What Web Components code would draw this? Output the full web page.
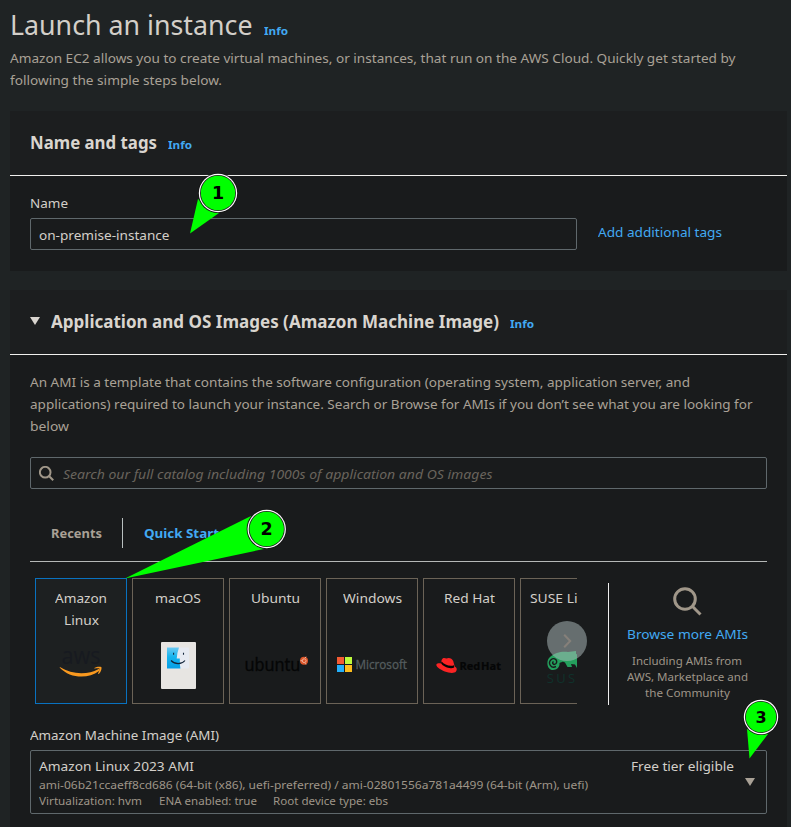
<!DOCTYPE html>
<html lang="en">
<head>
<meta charset="utf-8">
<title>Launch an instance</title>
<style>
html,body{margin:0;height:100%}
body{background:#1f2324;font:13px/22px "Noto Sans","Open Sans",sans-serif;color:#d3cfc9;overflow:hidden}
</style>
</head>
<body>
<launch-page></launch-page>
<script>
const define=(name,html,setup)=>customElements.define(name,class extends HTMLElement{
  constructor(){super();this.attachShadow({mode:'open'});}
  connectedCallback(){
    if(this.shadowRoot.childNodes.length)return;
    const t=document.createElement('template');
    t.innerHTML=typeof html==='function'?html(this):html;
    this.shadowRoot.append(t.content.cloneNode(true));
    if(setup)setup(this);
  }
});

/* One line of text, stretched so that it spans the width given in "w". */
define('text-line','<style>:host{display:block;flex:none;white-space:nowrap}span{display:inline-block;vertical-align:top;transform-origin:0 0}</style><span><slot></slot></span>',el=>{
  const s=el.shadowRoot.querySelector('span'),w=+el.getAttribute('w');
  if(!w)return;
  const k=w/s.getBoundingClientRect().width;
  s.style.transform=`scaleX(${k})`;
  el.style.width=w+'px';
});

define('info-link','<style>:host{display:block;font:bold 11px/22px "Noto Sans",sans-serif;color:#42a9f2}</style><text-line w="24">Info</text-line>');

define('panel-box',`<style>
:host{display:block;background:#191b1c;color:#d3cfc9}
header{display:flex;align-items:flex-start;height:64px;padding:20px 20px 0;box-sizing:border-box;background:#1c1e1f}
.line{height:1px;background:#f0efed}
.body{padding:16px 20px 0}
</style><header><slot name="header"></slot></header><div class="line"></div><div class="body"><slot></slot></div>`);

define('caret-down',`<style>:host{display:block;width:10px;height:8px}svg{display:block}</style><svg width="10" height="8"><path d="M0 0H10L5 8Z" fill="currentColor"/></svg>`);

define('search-glyph',el=>{const s=el.getAttribute('size');return `<style>:host{display:block;width:${s}px;height:${s}px}svg{display:block}</style>
<svg width="${s}" height="${s}" viewBox="0 0 29 29" fill="none" stroke="#a09789" stroke-width="${s<20?3.8:3}"><circle cx="12" cy="12" r="10.3"/><path d="M19.3 19.3L27.5 27.5"/></svg>`});

define('text-field',`<style>
:host{display:flex;align-items:flex-start;box-sizing:border-box;height:32px;border:1px solid #5f686c;border-radius:2px;padding:5px 8px 0;background:#191b1c}
</style><slot></slot>`);

define('os-card',`<style>
:host{display:flex;flex-direction:column;flex:none;box-sizing:border-box;width:92px;height:126px;border:1px solid #6b6357;padding-top:8px;align-items:center}
:host([selected]){border-color:#0972c0;background:#1d2021}
.name{height:43px;display:flex;flex-direction:column;align-items:center}
</style><div class="name"><slot></slot></div><slot name="logo"></slot>`);

define('logo-art',el=>{
const art={
aws:`<text x="25.5" y="34" font-size="24" textLength="39" lengthAdjust="spacingAndGlyphs" fill="#171a20" font-family="Open Sans">aws</text>
<g transform="translate(-1.2 -1.2)" fill="#f9991f"><path d="M25 38.2C38 46.5 54 45.5 63.3 40.4C64.6 39.6 65.5 41 64.2 42.1C53 50.8 35 49.4 25 38.9Z"/><path d="M59.5 39.3C62 37.7 65.5 37.7 66.7 38.4C67 40.5 66 43.5 64 45.2C63.3 45.5 63.2 45 63.5 44.3C64.2 42.4 65 40.3 64.6 39.8C63.8 39.2 61.5 39.5 60.2 39.7C59.5 39.8 59.2 39.5 59.5 39.3Z"/></g>`,
mac:`<defs><linearGradient id="a" x1="0" y1="0" x2="0" y2="1"><stop stop-color="#6cc9f2"/><stop offset=".45" stop-color="#16b4ee"/><stop offset="1" stop-color="#079ee5"/></linearGradient></defs>
<rect x="28" y="12" width="35" height="47" rx="1" fill="#e7e5e2"/><rect x="34" y="17.5" width="22" height="21" rx="1" fill="#e6eaf2"/>
<path d="M34 17.5H46Q44 23 43.7 28.5H46.8Q46.6 34 47.4 38.5H34Z" fill="url(#a)"/>
<path d="M40.6 22.8v2M50.5 22.8v2M38 30.5C42 34.7 48.5 34.7 52 30.5" stroke="#13253a" fill="none" stroke-width="1.1"/>`,
ubuntu:`<text x="14.4" y="41" font-size="17.5" textLength="56" lengthAdjust="spacingAndGlyphs" fill="#050606" stroke="#050606" stroke-width=".3" font-family="Noto Sans">ubuntu</text>
<circle cx="74" cy="30.7" r="4" fill="#dc5528"/><circle cx="74.2" cy="30.7" r="1.9" fill="none" stroke="#f1b09a"/><path d="M70.5 30.7h2M75.2 28l.8-1.3M75.2 33.2l.8 1.3" stroke="#f1b09a"/>`,
ms:`<path d="M10 27h7v7h-7z" fill="#f35b33"/><path d="M18 27h7v7h-7z" fill="#bdfb3c"/><path d="M10 35h7v7h-7z" fill="#24b0fb"/><path d="M18 35h7v7h-7z" fill="#fdbe1d"/>
<text x="28.5" y="39.3" font-size="12.5" textLength="51.5" lengthAdjust="spacingAndGlyphs" fill="#555d5f" font-family="Open Sans" stroke="#555d5f" stroke-width=".3">Microsoft</text>`,
redhat:`<path d="M17.5 30.5C18.5 27.5 20.5 27.8 22.5 28.6C24.5 27.4 28 28 29.2 31L30.7 36.5C33 37.5 33.4 39.5 32 41.5C29 45 19 41.5 14.5 38C12 35.8 11.6 34 13.6 33.4C15 33 16.5 33.4 17 33.4Z" fill="#fb2424"/><path d="M17 33C18.5 36.5 26 39.5 30.2 37.5L30 35.2C26 36.8 20 34.5 17.7 31.4Z" fill="#050505"/>
<text x="35.5" y="40.4" font-size="11" font-weight="bold" textLength="41.5" lengthAdjust="spacingAndGlyphs" fill="#050606" stroke="#050606" stroke-width=".2" word-spacing="-2" font-family="Open Sans">Red Hat</text>`,
suse:`<path d="M29 27C34 22 42 21 47 22L55 21V24L59 25V32L61 36V38L56 38L54 34.5L50 34L51 37H46.5L44 32.5C42 31 41 32 38.5 33C39 37 36 40 32 40C26 40 24.5 31 29 27Z" fill="#24a05d"/><path d="M35 36.5C30 39 26.5 33 30 29.7C33.5 26.8 37.5 31 34.8 33.8C32.5 35.6 30.3 32.6 32.6 31.7" fill="none" stroke="#191b1c" stroke-width="1.4"/>
<text x="25.8" y="53.2" font-size="13" letter-spacing="2.3" fill="#10312b" font-family="Open Sans">SUSE</text>`};
return `<style>:host{display:block;width:90px;height:64px}svg{display:block}</style><svg width="90" height="64">${art[el.getAttribute('kind')]}</svg>`});

define('browse-more',`<style>
:host{display:flex;flex-direction:column;align-items:center;width:120px}
.link{color:#42a9f2;margin-top:7px}
.sub{font-size:11.4px;line-height:16px;color:#9e9588;margin-top:8px;display:flex;flex-direction:column;align-items:center}
</style><search-glyph size="29"></search-glyph><text-line class="link" w="121">Browse more AMIs</text-line>
<div class="sub"><text-line w="110">Including AMIs from</text-line><text-line w="121">AWS, Marketplace and</text-line><text-line w="85">the Community</text-line></div>`);

define('scroll-next',`<style>:host{display:block;width:40px;height:40px}svg{display:block}</style>
<svg width="40" height="40"><circle cx="20" cy="20" r="20" fill="#adbcbc" fill-opacity=".52"/><path d="M17.2 13.7L23.2 20L17.2 26.3" fill="none" stroke="#86807a" stroke-width="2"/></svg>`);

/* Numbered marker: a disc with a wedge pointing at its target. */
define('step-marker',el=>{const [x,y,r]=el.getAttribute('at').split(' ');
return `<style>:host{position:absolute;inset:0;pointer-events:none}svg{display:block}</style>
<svg width="791" height="827"><path d="${el.getAttribute('wedge')}" fill="#0f0"/><circle cx="${x}" cy="${y}" r="${+r+.9}" fill="#151515"/><circle cx="${x}" cy="${y}" r="${r}" fill="#fff"/><circle cx="${x}" cy="${y}" r="${r-1.2}" fill="#222"/><circle cx="${x}" cy="${y}" r="${r-2}" fill="#0f0"/>
<text x="${x}" y="${+y+6}" text-anchor="middle" font-family="DejaVu Sans" font-weight="bold" font-size="${r>18?17.5:16}" fill="#000">${el.getAttribute('label')}</text></svg>`});

define('ami-select',`<style>
:host{display:flex;box-sizing:border-box;height:64px;border:1px solid #5f686c;border-radius:2px;padding:4px 11px 0 8px;align-items:flex-start}
.main{flex:1}.sub{font-size:11.4px;line-height:16px;color:#9e9588}
.meta{display:flex;gap:16.5px}.free{margin-right:11px}
caret-down{color:#a9a196;margin-top:23px}
</style><div class="main"><text-line w="155">Amazon Linux 2023 AMI</text-line>
<div class="sub"><text-line w="549">ami-06b21ccaeff8cd686 (64-bit (x86), uefi-preferred) / ami-02801556a781a4499 (64-bit (Arm), uefi)</text-line>
<div class="meta"><text-line w="103">Virtualization: hvm</text-line><text-line w="98">ENA enabled: true</text-line><text-line w="115">Root device type: ebs</text-line></div></div></div>
<text-line class="free" w="103">Free tier eligible</text-line><caret-down></caret-down>`);

define('launch-page',`<style>
:host{display:block;position:relative;width:791px;height:827px;overflow:hidden;box-sizing:border-box;padding:6px 4px 0 10px}
.title{display:flex;height:41px;gap:11px}
.title .t{font-size:28px;line-height:36px}
.title info-link{margin-top:14px}
.desc{color:#a9a196}
.intro{height:64px}
h2{margin:0;font:bold 17.5px/22px "Noto Sans",sans-serif;color:#d9d5cf}
panel-box info-link{margin:3px 0 0 11px}
.p1{height:160px}
.p2{height:540px;margin-top:19px}
caret-down{color:#d9d5cf;margin:7px 11px 0 0}
.label{margin-bottom:4px}
.row{display:flex;gap:20.5px}
.row text-field{width:547px}
.link{color:#42a9f2;margin-top:3px}
.search{margin-top:20px}
.search text-line{font-style:italic;color:#69645d;margin-left:9px}
.search search-glyph{margin-top:3px}
.tabs{display:flex;align-items:flex-start;margin-top:29px;height:43px;border-bottom:1px solid #b5b8b7;font-weight:bold;padding-left:21px}
.tabs text-line{margin-top:4px}
.tabs .sep{width:1px;height:30px;background:#b9c0c0;margin:0 21px 0 20px}
.rec{color:#a9a196}.qs{color:#42a9f2}
.catalog{display:flex;margin-top:16px;height:146px;position:relative}
.strip{display:flex;gap:5px;width:547px;height:126px;box-sizing:border-box;padding-left:5px;overflow:hidden}
.vsep{width:1px;height:122px;background:#eee;margin:5px 18px 0 31px}
browse-more{margin-top:9px}
scroll-next{position:absolute;left:517px;top:43px}
</style>
<div class="title"><text-line class="t" w="242.5">Launch an instance</text-line><info-link></info-link></div>
<div class="desc intro"><text-line w="725.5">Amazon EC2 allows you to create virtual machines, or instances, that run on the AWS Cloud. Quickly get started by</text-line><text-line w="212">following the simple steps below.</text-line></div>
<panel-box class="p1"><h2 slot="header"><text-line w="127">Name and tags</text-line></h2><info-link slot="header"></info-link>
<text-line class="label" w="38">Name</text-line>
<div class="row"><text-field><text-line w="130.5">on-premise-instance</text-line></text-field><text-line class="link" w="124">Add additional tags</text-line></div></panel-box>
<panel-box class="p2"><caret-down slot="header"></caret-down><h2 slot="header"><text-line w="448">Application and OS Images (Amazon Machine Image)</text-line></h2><info-link slot="header"></info-link>
<div class="desc"><text-line w="660">An AMI is a template that contains the software configuration (operating system, application server, and</text-line><text-line w="722.5">applications) required to launch your instance. Search or Browse for AMIs if you don’t see what you are looking for</text-line><text-line w="39">below</text-line></div>
<text-field class="search"><search-glyph size="15"></search-glyph><text-line w="429.5">Search our full catalog including 1000s of application and OS images</text-line></text-field>
<div class="tabs"><text-line class="rec" w="51">Recents</text-line><span class="sep"></span><text-line class="qs" w="75">Quick Start</text-line></div>
<div class="catalog"><div class="strip">
<os-card selected><text-line w="52">Amazon</text-line><text-line w="35">Linux</text-line><logo-art slot="logo" kind="aws"></logo-art></os-card>
<os-card><text-line w="46">macOS</text-line><logo-art slot="logo" kind="mac"></logo-art></os-card>
<os-card><text-line w="49">Ubuntu</text-line><logo-art slot="logo" kind="ubuntu"></logo-art></os-card>
<os-card><text-line w="59">Windows</text-line><logo-art slot="logo" kind="ms"></logo-art></os-card>
<os-card><text-line w="51">Red Hat</text-line><logo-art slot="logo" kind="redhat"></logo-art></os-card>
<os-card><text-line w="72">SUSE Linux</text-line><logo-art slot="logo" kind="suse"></logo-art></os-card>
</div><scroll-next></scroll-next><span class="vsep"></span><browse-more></browse-more></div>
<text-line class="label" w="189">Amazon Machine Image (AMI)</text-line>
<ami-select></ami-select></panel-box>
<step-marker at="218 193 19.2" wedge="M198 199L190 233.5L219 213Z" label="1"></step-marker>
<step-marker at="266.7 529 19.2" wedge="M251 516L125 578.5L264 549Z" label="2"></step-marker>
<step-marker at="761 717 17.2" wedge="M747 729L749.5 758.5L768 734Z" label="3"></step-marker>`);
</script>
</body>
</html>
